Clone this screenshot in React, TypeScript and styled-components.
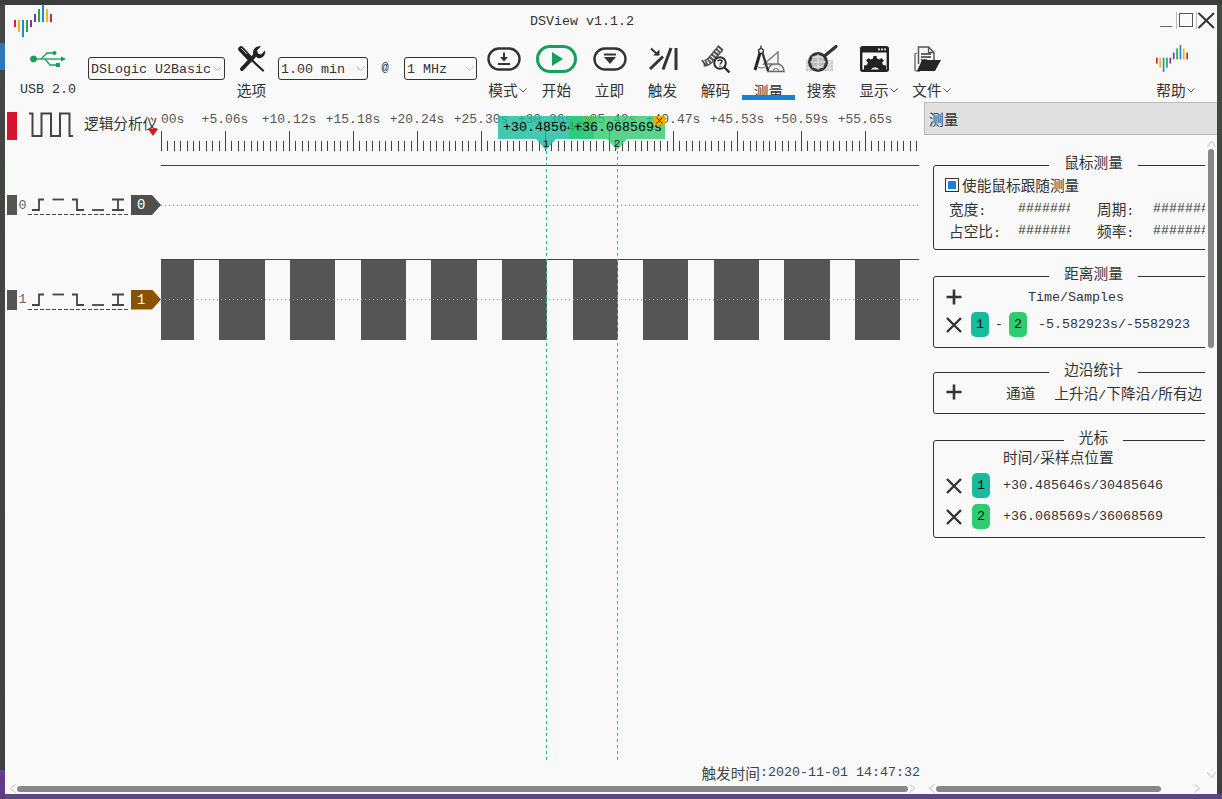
import React from "react";
import styled, { createGlobalStyle } from "styled-components";

const Global = createGlobalStyle`
  html, body { margin: 0; padding: 0; width: 1222px; height: 799px; overflow: hidden; }
  body { font-family: "Liberation Mono", "Noto Sans CJK SC", monospace; font-size: 13.33px; color: #333; }
  * { box-sizing: border-box; }
`;

const Desktop = styled.div`
  width: 1222px;
  height: 799px;
  padding: 5px 5px 5px 5px;
  background:
    linear-gradient(#2a78b8, #2a78b8) 0 43px / 5px 27px no-repeat,
    linear-gradient(#6a3c8e, #5d3a80) 0 770px / 5px 29px no-repeat,
    linear-gradient(#69418c, #4f4f6e) 0 794px / 100% 5px no-repeat,
    linear-gradient(#3c3c3c, #3c3c3c) 0 0 / 100% 5px no-repeat,
    linear-gradient(#454745, #3f3f3f);
`;
const Win = styled.div`
  width: 1212px;
  height: 789px;
  background: #f9f9f9;
  display: flex;
  flex-direction: column;
`;
const TitleBar = styled.div`
  height: 38px;
  display: flex;
  align-items: flex-start;
  flex: none;
`;
const LogoSlot = styled.div`
  margin-left: 9px;
  width: 38px;
  height: 32px;
  flex: none;
`;
const Title = styled.div`
  margin-left: 478px;
  margin-top: 9px;
  line-height: 16px;
  color: #333;
  white-space: pre;
`;
const WinControls = styled.svg`
  margin-left: auto;
  margin-top: 5px;
  margin-right: 1px;
  flex: none;
`;
const Toolbar = styled.div`
  height: 57px;
  display: flex;
  align-items: flex-start;
  flex: none;
`;
const UsbItem = styled.div`
  margin-left: 13px;
  width: 60px;
  display: flex;
  flex-direction: column;
  align-items: center;
  flex: none;
`;
const UsbIconBox = styled.div`
  height: 31px;
  display: flex;
  align-items: center;
`;
const UsbLabel = styled.div`
  margin-top: 7px;
  line-height: 18px;
  white-space: pre;
`;
const SelectBox = styled.div<{ $w: number; $ml?: number }>`
  width: ${(p) => p.$w}px;
  height: 23px;
  margin-top: 14px;
  margin-left: ${(p) => p.$ml ?? 0}px;
  border: 1px solid #333;
  border-radius: 3px;
  padding: 1px 2px 0;
  display: flex;
  align-items: center;
  justify-content: space-between;
  white-space: pre;
  flex: none;
  background: #f9f9f9;
`;
const At = styled.div`
  width: 36px;
  margin-top: 14px;
  padding-right: 2px;
  line-height: 23px;
  text-align: center;
  font-size: 12px;
  flex: none;
`;
const Tool = styled.div<{ $active?: boolean; $w?: number }>`
  position: relative;
  width: ${(p) => p.$w ?? 53}px;
  height: 57px;
  display: flex;
  flex-direction: column;
  align-items: center;
  flex: none;
  &::after {
    content: "";
    display: ${(p) => (p.$active ? "block" : "none")};
    position: absolute;
    left: 0;
    right: 0;
    bottom: 0;
    height: 5px;
    background: #1c80d2;
  }
`;
const HelpTool = styled(Tool)`
  margin-left: auto;
  margin-right: 19px;
`;
const IconBox = styled.div`
  height: 31px;
  display: flex;
  align-items: center;
  justify-content: center;
`;
const ToolLabel = styled.div<{ $active?: boolean; $menu?: boolean }>`
  margin-top: ${(p) => (p.$active ? 9 : 7)}px;
  padding-left: ${(p) => (p.$menu ? 8 : 0)}px;
  height: 18px;
  display: flex;
  align-items: center;
  gap: 1px;
  font-size: 14.67px;
  line-height: 18px;
  color: #333;
  font-family: "Noto Sans CJK SC", sans-serif;
`;
const Zh = styled.span`
  font-family: "Noto Sans CJK SC", sans-serif;
  font-size: 14.67px;
`;
const Main = styled.div`
  flex: 1;
  display: flex;
  min-height: 0;
`;
const Viewer = styled.div`
  position: relative;
  width: 919px;
  display: flex;
  flex-direction: column;
  flex: none;
`;
const ViewerHead = styled.div`
  height: 66px;
  display: flex;
  flex: none;
`;
const HeadLeft = styled.div`
  position: relative;
  width: 156px;
  display: flex;
  align-items: flex-start;
  padding: 12px 0 0 2px;
  flex: none;
`;
const RedHandle = styled.div`
  width: 10px;
  height: 28px;
  background: #d8142e;
  flex: none;
`;
const ModeWave = styled.svg`
  margin-left: 12px;
  flex: none;
`;
const ModeLabel = styled(Zh)`
  margin-left: 11px;
  margin-top: 2px;
  line-height: 18px;
  white-space: nowrap;
`;
const TriggerMark = styled.svg`
  position: absolute;
  left: 143px;
  top: 28px;
`;
const Signals = styled.div`
  flex: 1;
  display: flex;
  flex-direction: column;
  min-height: 0;
`;
const SignalRow = styled.div<{ $h: number; $mt?: number }>`
  height: ${(p) => p.$h}px;
  margin-top: ${(p) => p.$mt ?? 0}px;
  display: flex;
  align-items: center;
  flex: none;
`;
const ChanLeft = styled.div`
  width: 156px;
  display: flex;
  align-items: center;
  padding-left: 2px;
  flex: none;
`;
const GrayHandle = styled.div`
  width: 10px;
  height: 20px;
  background: #555;
  flex: none;
`;
const ChanNum = styled.div`
  width: 11px;
  text-align: center;
  color: #666;
  font-size: 13.33px;
  flex: none;
`;
const ChanTag = styled.div<{ $c: string }>`
  width: 30px;
  height: 20px;
  margin-left: 3px;
  padding-left: 6px;
  display: flex;
  align-items: center;
  color: #fff;
  background: ${(p) => p.$c};
  clip-path: polygon(0 0, 21px 0, 100% 50%, 21px 100%, 0 100%);
  font-size: 14px;
  flex: none;
`;
const Footer = styled.div`
  height: 22px;
  padding-right: 4px;
  display: flex;
  align-items: center;
  justify-content: flex-end;
  white-space: pre;
  color: #444;
  flex: none;
`;
const HBar = styled.div<{ $pl: number }>`
  height: 11px;
  padding-left: ${(p) => p.$pl}px;
  display: flex;
  align-items: center;
  gap: 1px;
  flex: none;
`;
const Thumb = styled.div<{ $w: number }>`
  width: ${(p) => p.$w}px;
  height: 6px;
  border-radius: 3px;
  background: #878787;
  flex: none;
`;
const FarArrow = styled.div<{ $ml: number }>`
  margin-left: ${(p) => p.$ml}px;
  display: flex;
`;
const CursorLine = styled.div<{ $x: number; $c: string }>`
  position: absolute;
  left: ${(p) => p.$x}px;
  top: 51px;
  width: 1px;
  height: 609px;
  background: repeating-linear-gradient(${(p) => p.$c} 0 3px, transparent 3px 6px);
`;
const Flag = styled.div<{ $x: number; $c: string }>`
  position: absolute;
  left: ${(p) => p.$x}px;
  top: 16px;
  width: 96px;
  height: 23px;
  padding-left: 5px;
  padding-top: 2px;
  background: ${(p) => p.$c};
  color: #000;
  line-height: 20px;
  white-space: pre;
`;
const FlagTip = styled.div<{ $c: string }>`
  position: absolute;
  left: 38px;
  top: 23px;
  width: 20px;
  height: 11px;
  background: ${(p) => p.$c};
  clip-path: polygon(0 0, 100% 0, 50% 100%);
`;
const FlagNum = styled.div`
  position: absolute;
  left: 44px;
  top: 21px;
  width: 8px;
  line-height: 14px;
  text-align: center;
  font-size: 11px;
  color: #222;
`;
const FlagClose = styled.div`
  position: absolute;
  right: 0;
  top: 0;
  width: 11px;
  height: 9px;
  background: #f0a80c;
  display: flex;
  align-items: center;
  justify-content: center;
`;
const Dock = styled.div`
  flex: 1;
  display: flex;
  flex-direction: column;
  min-width: 0;
`;
const DockHead = styled.div`
  margin-top: 2px;
  height: 33px;
  padding-left: 4px;
  display: flex;
  align-items: center;
  background: #e0e0e0;
  border: 1px solid #bbb;
  border-right: none;
  flex: none;
`;
const DockBody = styled.div`
  flex: 1;
  display: flex;
  min-height: 0;
`;
const Panel = styled.div`
  width: 281px;
  padding: 20px 0 0 9px;
  overflow: hidden;
  flex: none;
`;
const Group = styled.fieldset<{ $mb: number }>`
  width: 310px;
  margin: 0 0 ${(p) => p.$mb}px 0;
  padding: 0 0 0 11px;
  border: 1px solid #333;
  border-radius: 3px;
  min-width: 0;
`;
const GroupTitle = styled.legend`
  margin: 0 auto;
  padding: 0 15px;
  height: 20px;
  line-height: 14px;
  font-family: "Noto Sans CJK SC", sans-serif;
  font-size: 14.67px;
  letter-spacing: 0;
  color: #333;
`;
const CheckRow = styled.div`
  height: 19px;
  margin-bottom: 3px;
  display: flex;
  align-items: center;
  gap: 3px;
`;
const CheckBox = styled.div`
  width: 14px;
  height: 14px;
  border: 1px solid #333;
  padding: 2px;
  flex: none;
  &::before {
    content: "";
    display: block;
    width: 8px;
    height: 8px;
    background: #1a82dc;
  }
`;
const StatGrid = styled.div`
  padding: 0 0 8px 4px;
  display: grid;
  grid-template-columns: 69px 79px 56px 60px;
  grid-auto-rows: 22px;
  align-items: center;
`;
const Hashes = styled.div`
  width: 52px;
  overflow: hidden;
  white-space: pre;
`;
const Row = styled.div<{ $h?: number; $mt?: number; $mb?: number }>`
  height: ${(p) => p.$h ?? 20}px;
  margin-top: ${(p) => p.$mt ?? 0}px;
  margin-bottom: ${(p) => p.$mb ?? 0}px;
  display: flex;
  align-items: center;
  white-space: pre;
`;
const IconBtn = styled.svg`
  width: 18px;
  height: 18px;
  flex: none;
`;
const Badge = styled.div<{ $c: string; $ml: number }>`
  width: 18px;
  height: 25px;
  margin-left: ${(p) => p.$ml}px;
  border-radius: 5px;
  background: ${(p) => p.$c};
  color: #111;
  display: flex;
  align-items: center;
  justify-content: center;
  flex: none;
`;
const Dash = styled.div`
  width: 20px;
  text-align: center;
  flex: none;
`;
const Text = styled.div<{ $ml?: number }>`
  margin-left: ${(p) => p.$ml ?? 0}px;
  white-space: pre;
  flex: none;
`;
const VScroll = styled.div`
  flex: 1;
  display: flex;
  flex-direction: column;
  align-items: center;
  padding: 6px 0 5px;
`;
const VThumb = styled.div`
  width: 6px;
  height: 199px;
  margin-top: 2px;
  border-radius: 3px;
  background: #878787;
`;
const VDown = styled.div`
  margin-top: auto;
  display: flex;
`;

const Chevron = () => (
  <svg width="8" height="5" viewBox="0 0 8 5" fill="none" stroke="#555" strokeWidth="1"><path d="M0.5 0.5 4 4 7.5 0.5" /></svg>
);
const SelChevron = () => (
  <svg width="9" height="6" viewBox="0 0 9 6" fill="none" stroke="#bbb" strokeWidth="1"><path d="M0.5 0.5 4.5 4.5 8.5 0.5" /></svg>
);
const ScrollArrow = ({ dir }: { dir: "l" | "r" | "u" | "d" }) => {
  const h = dir === "l" || dir === "r";
  const d = dir === "l" ? "M5.5 0.5 0.5 4.5 5.5 8.5" : dir === "r" ? "M0.5 0.5 5.5 4.5 0.5 8.5" : dir === "u" ? "M0.5 5.5 4.5 0.5 8.5 5.5" : "M0.5 0.5 4.5 5.5 8.5 0.5";
  return (
    <svg width={h ? 6 : 9} height={h ? 9 : 6} fill="none" stroke="#bdbdbd" strokeWidth="1"><path d={d} /></svg>
  );
};

const LogoBars = ({ w, h }: { w: number; h: number }) => {
  const bars = [
    [20, 7, "#e0202f"], [20, 12, "#f2b41b"], [20, 17, "#1f88d8"], [20, 12, "#23a84f"], [20, 7, "#7a35a8"],
    [14, 8, "#7a35a8"], [9, 13, "#23a84f"], [5, 17, "#1f88d8"], [9, 13, "#f2b41b"], [14, 8, "#e0202f"],
  ] as [number, number, string][];
  return (
    <svg width={w} height={h} viewBox="14 5 38 32">
      {bars.map((b, i) => (
        <rect key={i} x={14 + i * 4} y={b[0]} width="2" height={b[1]} fill={b[2]} />
      ))}
    </svg>
  );
};

const UsbIcon = () => (
  <svg width="37" height="18" viewBox="0 0 37 18" fill="#12a05c" stroke="#12a05c">
    <circle cx="3.5" cy="9" r="3" />
    <path d="M4 9H31" strokeWidth="1.3" fill="none" />
    <path d="M31 6.5 36 9 31 11.5Z" stroke="none" />
    <path d="M11 9 17 3H23" strokeWidth="1.3" fill="none" />
    <circle cx="24.5" cy="3" r="2" stroke="none" />
    <path d="M15 9 20 15H26" strokeWidth="1.3" fill="none" />
    <rect x="26" y="13" width="4" height="4" stroke="none" />
  </svg>
);
const WrenchIcon = () => (
  <svg width="28" height="28" viewBox="0 0 28 28">
    <path d="M3 4 11 12.5" stroke="#222" strokeWidth="5.5" strokeLinecap="round" />
    <path d="M11 12.5 25 25.5" stroke="#222" strokeWidth="2.2" strokeLinecap="round" />
    <path d="M4 24 18 9" stroke="#222" strokeWidth="4" strokeLinecap="round" />
    <path d="M15 8.5C14.5 4 18.5 0.5 23 1.5L19 5.5 20 8.5 23 9.5 27 5.5C28 10 24 14 19.5 13Z" fill="#222" />
    <path d="M3 3 9 9" stroke="#f9f9f9" strokeWidth="0.8" />
  </svg>
);
const ModeIcon = () => (
  <svg width="34" height="24" viewBox="0 0 34 24" fill="none" stroke="#333">
    <rect x="1.5" y="1.5" width="31" height="21" rx="10.5" strokeWidth="2.4" />
    <path d="M17 5.5V12" strokeWidth="2" />
    <path d="M13 10H21L17 14.5Z" fill="#333" stroke="none" />
    <path d="M11 17H23" strokeWidth="2" />
  </svg>
);
const StartIcon = () => (
  <svg width="41" height="28" viewBox="0 0 41 28" fill="none">
    <rect x="1.5" y="1.5" width="38" height="25" rx="12.5" stroke="#16a05a" strokeWidth="3" />
    <path d="M16 7 27 14 16 21Z" fill="#16a05a" />
  </svg>
);
const NowIcon = () => (
  <svg width="34" height="24" viewBox="0 0 34 24" fill="none" stroke="#333">
    <rect x="1.5" y="1.5" width="31" height="21" rx="10.5" strokeWidth="2.4" />
    <path d="M11 7.5H23" strokeWidth="2" />
    <path d="M11 10H23L17 17Z" fill="#333" stroke="none" />
  </svg>
);
const TriggerIcon = () => (
  <svg width="30" height="24" viewBox="0 0 30 24" fill="none" stroke="#333" strokeWidth="3">
    <path d="M2 22 15 9.5" />
    <path d="M15 22.5 23 1" />
    <path d="M28 1V23" />
    <path d="M3 1.5 10 8" strokeWidth="2" />
    <path d="M5 8.5H11.5V2.5Z" fill="#333" stroke="none" />
  </svg>
);
const DecodeIcon = () => (
  <svg width="30" height="28" viewBox="0 0 30 28" fill="none">
    <path d="M3 18C9 19 13 9 20 3" stroke="#555" strokeWidth="7" />
    <path d="M3 18C9 19 13 9 20 3" stroke="#f4f4f4" strokeWidth="4" strokeDasharray="1.4 2" />
    <path d="M1 15 5 21M17 1 22 5" stroke="#444" strokeWidth="1.6" />
    <circle cx="19" cy="18" r="5.8" fill="#f9f9f9" stroke="#2a2a2a" strokeWidth="2" />
    <path d="M23.5 22.5 28.5 27.5" stroke="#2a2a2a" strokeWidth="2.4" />
    <path d="M17 16.5C17 14.5 21 14.5 21 16.5 21 18 19 18 19 19.5M19 20.6V21.8" stroke="#2a2a2a" strokeWidth="1.4" />
  </svg>
);
const MeasureIcon = () => (
  <svg width="32" height="30" viewBox="0 0 32 30" fill="none">
    <path d="M15 28.5A8 8 0 0 1 31 28.5Z" stroke="#666" strokeWidth="1.5" fill="#f0f0f0" />
    <path d="M20 28.5A3 3 0 0 1 26 28.5" stroke="#777" strokeWidth="1" />
    <path d="M11 21 25 9 25 21Z" stroke="#777" strokeWidth="1.4" fill="#f6f6f6" />
    <circle cx="8" cy="8" r="2.4" stroke="#333" strokeWidth="1.4" />
    <path d="M8 2.5V5.5" stroke="#333" strokeWidth="1.4" />
    <path d="M7 10 2 27" stroke="#222" strokeWidth="3" />
    <path d="M9.5 10 15 28" stroke="#333" strokeWidth="2.4" />
    <path d="M3 22C6 26 11 26 14 22" stroke="#666" strokeWidth="1" />
  </svg>
);
const SearchIcon = () => (
  <svg width="32" height="28" viewBox="0 0 32 28" fill="none">
    <path d="M0 15H27V26H0Z" fill="#c9c9c9" />
    <path d="M0 17H27M0 20H27M0 23H27M3 15V26M7 15V26M21 15V26M24 15V26" stroke="#f0f0f0" strokeWidth="0.8" />
    <circle cx="12" cy="17" r="8.5" fill="#bbb" stroke="#333" strokeWidth="3" />
    <path d="M12 9V25M4 17H20M6 12H18M6 22H18" stroke="#eee" strokeWidth="0.9" />
    <path d="M18.5 11 30 1.5" stroke="#333" strokeWidth="3.2" strokeLinecap="round" />
  </svg>
);
const DisplayIcon = () => (
  <svg width="29" height="26" viewBox="0 0 29 26" fill="none">
    <rect x="1.2" y="1.2" width="26.6" height="23.6" rx="1.5" stroke="#222" strokeWidth="2.4" />
    <rect x="1" y="1" width="27" height="5.5" fill="#222" />
    <rect x="18" y="2.5" width="1.8" height="1.8" fill="#fff" />
    <rect x="21" y="2.5" width="1.8" height="1.8" fill="#fff" />
    <rect x="24" y="2.5" width="1.8" height="1.8" fill="#fff" />
    <path d="M4 24V19.5L7 19 7.8 16.5 6 14.5 8.5 12 10.5 13.5 13 12.5 13.5 10H16.5L17 12.5 19.5 13.5 21.5 12 24 14.5 22.2 16.5 23 19 26 19.5V24H19.5A5 5 0 0 0 10.5 24Z" fill="#222" />
  </svg>
);
const FileIcon = () => (
  <svg width="28" height="26" viewBox="0 0 28 26" fill="none">
    <path d="M4.5 18V1H14.5L20 6.5V14" stroke="#555" strokeWidth="1.5" fill="#f9f9f9" />
    <path d="M14.5 1V6.5H20" stroke="#555" strokeWidth="1.3" />
    <path d="M7 8H17M7 11H17M7 14H13" stroke="#333" strokeWidth="1.3" />
    <path d="M3 7 1 8V24L3 25H6" stroke="#888" strokeWidth="1.8" />
    <path d="M3 25 8 14H27L21 25Z" fill="#262626" />
  </svg>
);

const PlusIcon = () => (
  <IconBtn viewBox="0 0 18 18"><path d="M9 1.5V16.5M1.5 9H16.5" stroke="#333" strokeWidth="2.6" /></IconBtn>
);
const CrossIcon = () => (
  <IconBtn viewBox="0 0 18 18"><path d="M2 2 16 16M16 2 2 16" stroke="#333" strokeWidth="2.4" /></IconBtn>
);

const PATTERN = (
  <svg width="100" height="20" viewBox="0 0 100 20" fill="none" style={{ flex: "none" }}>
    <g stroke="#444" strokeWidth="1.8">
      <path d="M4 15H11V4.5H16" />
      <path d="M24.5 4.5H36" />
      <path d="M44 4.5H49V15H56" />
      <path d="M64 15H76" />
      <path d="M84 4.5H96M84 15H96M90 4.5V15" />
    </g>
    <path d="M0 19.5H100" stroke="#444" strokeWidth="1" strokeDasharray="4 2" />
  </svg>
);

const labels = ["+0.00s", "+5.06s", "+10.12s", "+15.18s", "+20.24s", "+25.30s", "+30.36s", "+35.42s", "+40.47s", "+45.53s", "+50.59s", "+55.65s"];
const Ruler = () => {
  const ticks: React.ReactNode[] = [];
  for (let i = 0; i <= 118; i++) {
    const x = Math.round(i * 6.4) + 0.5;
    ticks.push(<path key={i} d={`M${x} ${i % 10 === 0 ? 31 : 41}V51`} stroke="#444" strokeWidth="1" />);
  }
  return (
    <svg width="758" height="66" viewBox="0 0 758 66" style={{ flex: "none" }}>
      {labels.map((l, i) => (
        <text key={l} x={i * 64} y="23" textAnchor="middle" fontFamily="Liberation Mono" fontSize="13" fill="#555">{l}</text>
      ))}
      {ticks}
      <path d="M0 65.5H758" stroke="#444" strokeWidth="1" />
    </svg>
  );
};
const bars = [[161, 194], [219, 265], [290, 335], [361, 406], [431, 477], [502, 547], [573, 618], [643, 688], [714, 759], [784, 830], [855, 900]];

export default function App() {
  return (
    <Desktop>
      <Global />
      <Win>
        <TitleBar>
          <LogoSlot><LogoBars w={38} h={32} /></LogoSlot>
          <Title>DSView v1.1.2</Title>
          <WinControls width="57" height="20" viewBox="1160 10 57 20" fill="none">
            <path d="M1161 26.5H1173" stroke="#666" />
            <path d="M1177.5 12V29M1197.5 12V29" stroke="#bbb" />
            <rect x="1180.5" y="13.5" width="13" height="13" stroke="#555" />
            <path d="M1199.5 13 1215 28M1215 13 1199.5 28" stroke="#333" strokeWidth="2" />
          </WinControls>
        </TitleBar>
        <Toolbar>
          <UsbItem>
            <UsbIconBox><UsbIcon /></UsbIconBox>
            <UsbLabel>USB 2.0</UsbLabel>
          </UsbItem>
          <SelectBox $w={137} $ml={10}>DSLogic U2Basic<SelChevron /></SelectBox>
          <Tool>
            <IconBox><WrenchIcon /></IconBox>
            <ToolLabel>选项</ToolLabel>
          </Tool>
          <SelectBox $w={90}>1.00 min<SelChevron /></SelectBox>
          <At>@</At>
          <SelectBox $w={73}>1 MHz<SelChevron /></SelectBox>
          <Tool><IconBox><ModeIcon /></IconBox><ToolLabel $menu>模式<Chevron /></ToolLabel></Tool>
          <Tool><IconBox><StartIcon /></IconBox><ToolLabel>开始</ToolLabel></Tool>
          <Tool><IconBox><NowIcon /></IconBox><ToolLabel>立即</ToolLabel></Tool>
          <Tool><IconBox><TriggerIcon /></IconBox><ToolLabel>触发</ToolLabel></Tool>
          <Tool><IconBox><DecodeIcon /></IconBox><ToolLabel>解码</ToolLabel></Tool>
          <Tool $active><IconBox><MeasureIcon /></IconBox><ToolLabel $active>测量</ToolLabel></Tool>
          <Tool><IconBox><SearchIcon /></IconBox><ToolLabel>搜索</ToolLabel></Tool>
          <Tool><IconBox><DisplayIcon /></IconBox><ToolLabel $menu>显示<Chevron /></ToolLabel></Tool>
          <Tool><IconBox><FileIcon /></IconBox><ToolLabel $menu>文件<Chevron /></ToolLabel></Tool>
          <HelpTool><IconBox><LogoBars w={32} h={27} /></IconBox><ToolLabel $menu>帮助<Chevron /></ToolLabel></HelpTool>
        </Toolbar>
        <Main>
          <Viewer>
            <ViewerHead>
              <HeadLeft>
                <RedHandle />
                <ModeWave width="44" height="26" viewBox="0 0 44 26" fill="none">
                  <path d="M0 1.5H3.5V24H12.5V1.5H22V24H31V1.5H40.5V24H44" stroke="#444" strokeWidth="2" />
                </ModeWave>
                <ModeLabel>逻辑分析仪</ModeLabel>
                <TriggerMark width="10" height="8" viewBox="0 0 10 8"><path d="M0 1 2.5 0 5 1 7.5 0 10 1 5 8Z" fill="#d8142e" /></TriggerMark>
              </HeadLeft>
              <Ruler />
            </ViewerHead>
            <Signals>
              <SignalRow $h={78}>
                <ChanLeft>
                  <GrayHandle />
                  <ChanNum>0</ChanNum>
                  {PATTERN}
                  <ChanTag $c="#4f4f4f">0</ChanTag>
                </ChanLeft>
                <svg width="758" height="78" viewBox="0 0 758 78" style={{ flex: "none" }}>
                  <path d="M0 39.5H758" stroke="#999" strokeDasharray="1 3" />
                </svg>
              </SignalRow>
              <SignalRow $h={81} $mt={15}>
                <ChanLeft>
                  <GrayHandle />
                  <ChanNum>1</ChanNum>
                  {PATTERN}
                  <ChanTag $c="#8a5200">1</ChanTag>
                </ChanLeft>
                <svg width="758" height="81" viewBox="161 259 758 81" style={{ flex: "none" }}>
                  {bars.map(([a, b]) => (
                    <rect key={a} x={a} y="259" width={b - a} height="81" fill="#555" />
                  ))}
                  <path d="M161 259.5H919" stroke="#444" />
                  <path d="M161 299.5H919" stroke="#999" strokeDasharray="1 3" />
                </svg>
              </SignalRow>
            </Signals>
            <Footer><Zh>触发时间</Zh>:2020-11-01 14:47:32</Footer>
            <HBar $pl={5}>
              <ScrollArrow dir="l" />
              <Thumb $w={891} />
              <ScrollArrow dir="r" />
            </HBar>
            <CursorLine $x={541} $c="#16bc9c" />
            <CursorLine $x={612} $c="#2bbf9a" />
            <Flag $x={493} $c="rgba(22,188,156,0.8)">
              +30.485646s
              <FlagClose><svg width="7" height="7" viewBox="0 0 7 7"><path d="M0.5 0.5 6.5 6.5M6.5 0.5 0.5 6.5" stroke="#222" /></svg></FlagClose>
              <FlagTip $c="rgba(22,188,156,0.8)" />
              <FlagNum>1</FlagNum>
            </Flag>
            <Flag $x={564} $c="rgba(46,204,113,0.8)">
              +36.068569s
              <FlagClose><svg width="7" height="7" viewBox="0 0 7 7"><path d="M0.5 0.5 6.5 6.5M6.5 0.5 0.5 6.5" stroke="#222" /></svg></FlagClose>
              <FlagTip $c="rgba(46,204,113,0.8)" />
              <FlagNum>2</FlagNum>
            </Flag>
          </Viewer>
          <Dock>
            <DockHead><Zh>测量</Zh></DockHead>
            <DockBody>
              <Panel>
                <Group $mb={16}>
                  <GroupTitle>鼠标测量</GroupTitle>
                  <CheckRow><CheckBox /><Zh>使能鼠标跟随测量</Zh></CheckRow>
                  <StatGrid>
                    <div><Zh>宽度</Zh>:</div>
                    <Hashes>########</Hashes>
                    <div><Zh>周期</Zh>:</div>
                    <Hashes>########</Hashes>
                    <div><Zh>占空比</Zh>:</div>
                    <Hashes>########</Hashes>
                    <div><Zh>频率</Zh>:</div>
                    <Hashes>########</Hashes>
                  </StatGrid>
                </Group>
                <Group $mb={14}>
                  <GroupTitle>距离测量</GroupTitle>
                  <Row $mt={1}><PlusIcon /><Text $ml={65}>Time/Samples</Text></Row>
                  <Row $h={25} $mt={5} $mb={10}>
                    <CrossIcon />
                    <Badge $c="#16bc9c" $ml={8}>1</Badge>
                    <Dash>-</Dash>
                    <Badge $c="#2ecc71" $ml={0}>2</Badge>
                    <Text $ml={11}>-5.582923s/-5582923</Text>
                  </Row>
                </Group>
                <Group $mb={16}>
                  <GroupTitle>边沿统计</GroupTitle>
                  <Row $mb={11}>
                    <PlusIcon />
                    <Text $ml={43}><Zh>通道</Zh></Text>
                    <Text $ml={19}><Zh>上升沿</Zh>/<Zh>下降沿</Zh>/<Zh>所有边</Zh></Text>
                  </Row>
                </Group>
                <Group $mb={0}>
                  <GroupTitle>光标</GroupTitle>
                  <Row $h={13}><Text $ml={58}><Zh>时间</Zh>/<Zh>采样点位置</Zh></Text></Row>
                  <Row $h={25} $mt={10}>
                    <CrossIcon />
                    <Badge $c="#16bc9c" $ml={9}>1</Badge>
                    <Text $ml={13}>+30.485646s/30485646</Text>
                  </Row>
                  <Row $h={25} $mt={6} $mb={8}>
                    <CrossIcon />
                    <Badge $c="#2ecc71" $ml={9}>2</Badge>
                    <Text $ml={13}>+36.068569s/36068569</Text>
                  </Row>
                </Group>
              </Panel>
              <VScroll>
                <ScrollArrow dir="u" />
                <VThumb />
                <VDown><ScrollArrow dir="d" /></VDown>
              </VScroll>
            </DockBody>
            <HBar $pl={5}>
              <ScrollArrow dir="l" />
              <Thumb $w={225} />
              <FarArrow $ml={32}><ScrollArrow dir="r" /></FarArrow>
            </HBar>
          </Dock>
        </Main>
      </Win>
    </Desktop>
  );
}
